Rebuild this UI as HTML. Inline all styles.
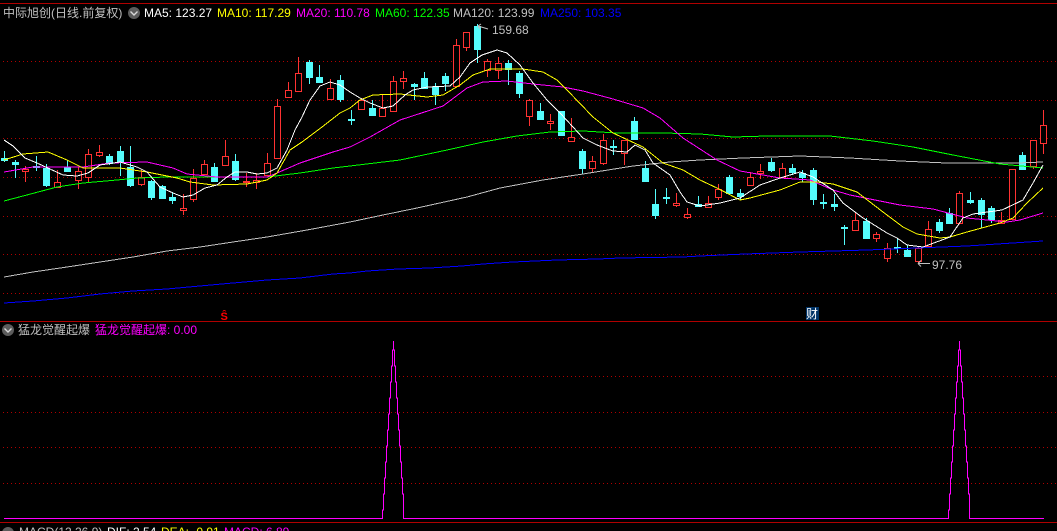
<!DOCTYPE html>
<html><head><meta charset="utf-8"><style>
html,body{margin:0;padding:0;background:#000;width:1057px;height:531px;overflow:hidden}
svg{position:absolute;left:0;top:0}
text{font-family:"Liberation Sans","WenQuanYi Zen Hei","Noto Sans CJK SC",sans-serif;font-size:12px}
</style></head><body>
<svg width="1057" height="531" viewBox="0 0 1057 531" xmlns="http://www.w3.org/2000/svg">
<rect width="1057" height="531" fill="#000"/>
<g shape-rendering="crispEdges" fill="none">
<path d="M0 3.5H1057M0 321.5H1057M0 522.5H1057" stroke="#b00000"/>
<path d="M3 61.5H1057M3 100.5H1057M3 138.5H1057M3 177.5H1057M3 216.5H1057M3 254.5H1057M3 293.5H1057M3 376.5H1057M3 412.5H1057M3 447.5H1057M3 483.5H1057" stroke="#b00000" stroke-dasharray="1 3"/>
<!-- cyan candles -->
<path stroke="#54fcfc" d="M4.5 151V162M15.5 160V178M36.5 156V171M46.5 164V187M67.5 160V172M109.5 154V165M120.5 146V176M130.5 146V187M151.5 180V200M162.5 185V199M172.5 192V204M214.5 163V181M235.5 154V181M309.5 60V84M319.5 65V82M340.5 75V102M351.5 110V125M372.5 100V116M414.5 83V100M424.5 72V88M435.5 83V105M445.5 73V91M477.5 24V63M508.5 60V85M519.5 71V98M540.5 103V119M561.5 111V135M582.5 149V174M613.5 140V155M634.5 117V139M645.5 161V182M655.5 189V219M666.5 188V204M698.5 196V207M729.5 175V193M740.5 189V200M771.5 158V172M792.5 164V175M802.5 170V182M813.5 168V205M823.5 194V209M834.5 194V211M844.5 225V245M866.5 218V238M897.5 238V253M907.5 245V257M939.5 219V233M949.5 208V224M970.5 192V204M981.5 198V228M991.5 206V223M1022.5 152V170"/>
<path fill="#54fcfc" d="M1 158H8V161H1ZM12 162H19V165H12ZM33 166H40V168H33ZM43 168H50V186H43ZM64 167H71V172H64ZM106 156H113V164H106ZM117 151H124V163H117ZM127 167H134V186H127ZM148 181H155V198H148ZM159 186H166V199H159ZM169 197H176V201H169ZM211 167H218V182H211ZM232 161H239V180H232ZM306 62H313V78H306ZM316 77H323V83H316ZM337 80H344V100H337ZM348 119H355V121H348ZM369 108H376V116H369ZM411 84H418V87H411ZM421 78H428V89H421ZM432 87H439V95H432ZM442 76H449V84H442ZM474 26H481V50H474ZM505 63H512V70H505ZM516 73H523V94H516ZM537 111H544V120H537ZM558 111H565V136H558ZM579 151H586V169H579ZM610 146H617V148H610ZM631 121H638V140H631ZM642 168H649V182H642ZM652 204H659V216H652ZM663 197H670V199H663ZM695 204H702V207H695ZM726 177H733V194H726ZM737 193H744V197H737ZM768 162H775V171H768ZM789 168H796V173H789ZM799 173H806V178H799ZM810 170H817V200H810ZM820 202H827V204H820ZM831 204H838V207H831ZM841 227H848V229H841ZM863 221H870V239H863ZM894 247H901V249H894ZM904 250H911V257H904ZM936 222H943V231H936ZM946 213H953V224H946ZM967 200H974V203H967ZM978 200H985V215H978ZM988 208H995V220H988ZM1019 155H1026V170H1019Z"/>
<!-- red candles -->
<path stroke="#ff3232" d="M25.5 166V169M25.5 171V182M57.5 170V182M57.5 187V188M78.5 167V171M78.5 180V189M88.5 149V154M88.5 177V182M99.5 145V152M99.5 155V157M141.5 170V177M141.5 184V186M183.5 194V208M183.5 210V215M193.5 169V178M193.5 199V202M204.5 160V164M225.5 140V156M246.5 173V181M246.5 182V187M256.5 173V180M256.5 182V189M267.5 153V163M277.5 99V106M288.5 82V90M298.5 57V73M330.5 79V88M330.5 99V100M361.5 98V100M382.5 94V108M393.5 76V81M403.5 71V78M403.5 81V89M456.5 39V45M456.5 86V87M466.5 47V51M487.5 59V61M487.5 70V77M498.5 57V63M498.5 70V79M529.5 99V100M529.5 116V126M550.5 114V121M550.5 123V130M571.5 118V137M571.5 141V142M592.5 156V161M592.5 168V173M603.5 134V140M603.5 163V165M624.5 153V165M676.5 193V203M676.5 205V207M687.5 208V214M687.5 217V219M718.5 184V189M718.5 197V200M708.5 196V203M750.5 172V177M760.5 164V171M760.5 173V179M782.5 163V168M855.5 213V220M876.5 232V234M876.5 238V242M887.5 243V248M887.5 258V262M918.5 247V248M918.5 261V263M928.5 221V229M928.5 246V247M959.5 191V193M1001.5 212V220M1001.5 223V224M1012.5 219V220M1033.5 166V169M1043.5 110V125M1043.5 143V154"/>
<path stroke="#ff3232" fill="#000" d="M22.5 169.5H28.5V171.5H22.5ZM54.5 182.5H60.5V187.5H54.5ZM75.5 171.5H81.5V180.5H75.5ZM85.5 154.5H91.5V177.5H85.5ZM96.5 152.5H102.5V155.5H96.5ZM138.5 177.5H144.5V184.5H138.5ZM180.5 208.5H186.5V210.5H180.5ZM190.5 178.5H196.5V199.5H190.5ZM201.5 164.5H207.5V174.5H201.5ZM222.5 156.5H228.5V165.5H222.5ZM243.5 181.5H249.5V182.5H243.5ZM253.5 180.5H259.5V182.5H253.5ZM264.5 163.5H270.5V175.5H264.5ZM274.5 106.5H280.5V158.5H274.5ZM285.5 90.5H291.5V97.5H285.5ZM295.5 73.5H301.5V91.5H295.5ZM327.5 88.5H333.5V99.5H327.5ZM358.5 100.5H364.5V109.5H358.5ZM379.5 108.5H385.5V116.5H379.5ZM390.5 81.5H396.5V111.5H390.5ZM400.5 78.5H406.5V81.5H400.5ZM453.5 45.5H459.5V86.5H453.5ZM463.5 32.5H469.5V47.5H463.5ZM484.5 61.5H490.5V70.5H484.5ZM495.5 63.5H501.5V70.5H495.5ZM526.5 100.5H532.5V116.5H526.5ZM547.5 121.5H553.5V123.5H547.5ZM568.5 137.5H574.5V141.5H568.5ZM589.5 161.5H595.5V168.5H589.5ZM600.5 140.5H606.5V163.5H600.5ZM621.5 140.5H627.5V153.5H621.5ZM673.5 203.5H679.5V205.5H673.5ZM684.5 214.5H690.5V217.5H684.5ZM705.5 203.5H711.5V207.5H705.5ZM715.5 189.5H721.5V197.5H715.5ZM747.5 177.5H753.5V185.5H747.5ZM757.5 171.5H763.5V173.5H757.5ZM779.5 168.5H785.5V177.5H779.5ZM852.5 220.5H858.5V230.5H852.5ZM873.5 234.5H879.5V238.5H873.5ZM884.5 248.5H890.5V258.5H884.5ZM915.5 248.5H921.5V261.5H915.5ZM925.5 229.5H931.5V246.5H925.5ZM956.5 193.5H962.5V223.5H956.5ZM998.5 220.5H1004.5V223.5H998.5ZM1009.5 169.5H1015.5V219.5H1009.5ZM1030.5 140.5H1036.5V166.5H1030.5ZM1040.5 125.5H1046.5V143.5H1040.5Z"/>
<!-- MA250 -->
<polyline stroke="#0000ff" points="4,303 33,301 67,298 100,294 133,291 167,289 200,286 233,283 267,280 300,278 333,274 350,273 367,271 398,269 430,268 462,266 483,264 513,262 557,260 598,259 620,258 683,257 700,256 745,254 800,252 867,250 917,248 967,246 1043,241"/>
<!-- MA120 -->
<polyline stroke="#c0c0c0" points="4,277 33,272 67,267 100,262 133,257 167,251 200,247 233,242 267,237 307,230 350,222 383,215 417,208 467,197 500,188 543,180 583,174 633,166 670,162 700,160 743,158 800,156 850,158 900,161 947,163 1017,163 1043,162"/>
<!-- MA60 -->
<polyline stroke="#00ff00" points="4,201 23,196 57,187 83,183 117,180 137,178 167,177 267,177 300,173 333,168 350,166 400,160 447,150 483,142 517,136 550,132 583,131 617,133 663,133 700,134 733,137 767,136 830,136 873,141 913,147 953,155 1000,164 1043,168"/>
<!-- MA20 -->
<polyline stroke="#ff00ff" points="4,172 33,167 83,167 110,163 147,162 173,168 187,174 217,177 257,177 267,177 277,173 300,163 333,152 350,147 370,137 400,120 443,106 467,88 483,82 507,81 533,84 563,87 583,91 613,99 643,108 660,118 683,138 700,149 717,160 740,171 780,178 810,180 833,190 850,195 900,205 933,209 967,218 1007,222 1020,220 1043,213"/>
<!-- MA10 -->
<polyline stroke="#ffff00" points="4,160 23,154 48,152 67,160 83,168 120,168 147,172 177,178 190,182 213,185 247,184 267,180 277,173 290,150 302,142 322,127 340,113 350,108 360,100 373,95 400,94 427,97 443,95 460,85 473,75 490,69 523,69 543,72 557,80 567,90 593,117 613,133 643,147 663,163 683,170 700,180 717,188 740,200 750,198 780,190 800,182 817,182 833,184 857,192 883,212 903,227 917,234 940,238 950,237 967,232 1000,223 1013,218 1027,203 1043,188"/>
<!-- MA5 -->
<polyline stroke="#ffffff" points="4,140 13,146 25,158 37,163 50,169 63,175 77,176 88,173 100,165 120,162 137,167 147,172 160,187 173,193 183,197 193,195 205,188 217,185 227,177 235,172 247,172 257,174 267,173 277,168 287,150 295,130 302,117 310,100 320,86 330,82 340,85 350,92 360,98 370,103 383,108 393,106 405,95 413,90 427,87 450,86 460,77 470,63 482,55 497,50 507,53 520,65 533,83 547,100 560,113 573,127 583,138 597,145 613,151 627,152 635,145 645,150 653,163 670,175 680,192 687,202 700,206 720,203 740,198 760,185 780,178 800,172 813,177 833,190 843,203 863,218 887,233 897,238 907,245 923,247 950,237 963,218 973,214 1002,210 1023,200 1033,183 1043,165"/>
<!-- spikes -->
<path stroke="#ff00ff" d="M4 518.5H382.5V510H383.5V494H384.5V478H385.5V462H386.5V446H387.5V430H388.5V414H389.5V398H390.5V382H391.5V366H392.5V350H393.5V341M393.5 350H394.5V366H395.5V382H396.5V398H397.5V414H398.5V430H399.5V446H400.5V462H401.5V478H402.5V494H403.5V518.5H948.5V510H949.5V494H950.5V478H951.5V462H952.5V446H953.5V430H954.5V414H955.5V398H956.5V382H957.5V366H958.5V350H959.5V341M959.5 350H960.5V366H961.5V382H962.5V398H963.5V414H964.5V430H965.5V446H966.5V462H967.5V478H968.5V494H969.5V518.5H1044"/>
<rect x="806" y="307" width="13" height="13" fill="#003366"/>
</g>
<!-- annotation arrows -->
<path d="M478 26L488 29M478 26l3-2M478 26l2 3" stroke="#c0c0c0" fill="none"/>
<path d="M918 263.5H930M918 263.5l3-3M918 263.5l3 3" stroke="#c0c0c0" fill="none"/>
<!-- icons -->
<circle cx="134" cy="13" r="6" fill="#5c5c5c"/><path d="M130.5 11.5L134 15L137.5 11.5" stroke="#d8d8d8" stroke-width="1.4" fill="none"/>
<circle cx="8" cy="330" r="6" fill="#5c5c5c"/><path d="M4.5 328.5L8 332L11.5 328.5" stroke="#d8d8d8" stroke-width="1.4" fill="none"/>
<circle cx="8" cy="533" r="6" fill="#5c5c5c"/>
<!-- text -->
<text x="3" y="17" fill="#c0c0c0">中际旭创(日线.前复权)</text>
<text x="144" y="17" fill="#ffffff">MA5: 123.27</text>
<text x="217" y="17" fill="#ffff00">MA10: 117.29</text>
<text x="296" y="17" fill="#ff00ff">MA20: 110.78</text>
<text x="375" y="17" fill="#00ff00">MA60: 122.35</text>
<text x="453" y="17" fill="#c0c0c0">MA120: 123.99</text>
<text x="540" y="17" fill="#0000ff">MA250: 103.35</text>
<text x="492" y="34" fill="#c0c0c0">159.68</text>
<text x="932" y="269" fill="#c0c0c0">97.76</text>
<text x="220.5" y="320" fill="#ff0000" font-weight="bold" style="font-size:11px">Ŝ</text>
<text x="806" y="318" fill="#ffffff">财</text>
<text x="18" y="334" fill="#c0c0c0">猛龙觉醒起爆</text>
<text x="95" y="334" fill="#ff00ff">猛龙觉醒起爆: 0.00</text>
<text x="19" y="536" fill="#c0c0c0">MACD(12,26,9)</text>
<text x="107" y="536" fill="#ffffff">DIF: 2.54</text>
<text x="161" y="536" fill="#ffff00">DEA: -0.91</text>
<text x="224" y="536" fill="#ff00ff">MACD: 6.89</text>
</svg>
</body></html>
